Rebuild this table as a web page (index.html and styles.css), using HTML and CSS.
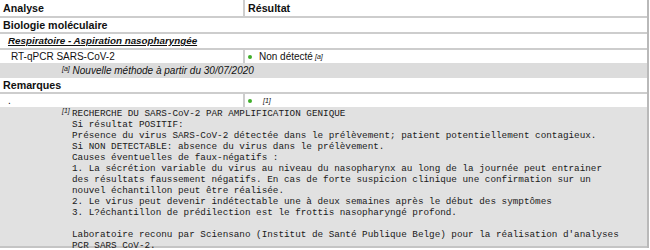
FILE: index.html
```html
<!DOCTYPE html>
<html lang="fr">
<head>
<meta charset="utf-8">
<link rel="stylesheet" href="styles.css">
</head>
<body>
<div class="report">
  <div class="row head">
    <div class="cell">Analyse</div>
    <div class="cell res">Résultat</div>
  </div>
  <div class="row group">
    <div class="cell span">Biologie moléculaire</div>
  </div>
  <div class="row sub">
    <div class="cell span"><span class="subtitle">Respiratoire - Aspiration nasopharyngée</span></div>
  </div>
  <div class="row test">
    <div class="cell name">RT-qPCR SARS-CoV-2</div>
    <div class="cell res"><span class="dot"></span>Non détecté <sup class="ref">[a]</sup></div>
  </div>
  <div class="note"><sup class="ref">[a]</sup> Nouvelle méthode à partir du 30/07/2020</div>
  <div class="row group">
    <div class="cell span">Remarques</div>
  </div>
  <div class="row test dotrow">
    <div class="cell name">.</div>
    <div class="cell res"><span class="dot"></span><sup class="ref">[1]</sup></div>
  </div>
<pre class="comment"><sup class="ref hang">[1]</sup>RECHERCHE DU SARS-CoV-2 PAR AMPLIFICATION GENIQUE
Si résultat POSITIF:
Présence du virus SARS-CoV-2 détectée dans le prélèvement; patient potentiellement contagieux.
Si NON DETECTABLE: absence du virus dans le prélèvement.
Causes éventuelles de faux-négatifs :
1. La sécrétion variable du virus au niveau du nasopharynx au long de la journée peut entrainer
des résultats faussement négatifs. En cas de forte suspicion clinique une confirmation sur un
nouvel échantillon peut être réalisée.
2. Le virus peut devenir indétectable une à deux semaines après le début des symptômes
3. L?échantillon de prédilection est le frottis nasopharyngé profond.

Laboratoire reconu par Sciensano (Institut de Santé Publique Belge) pour la réalisation d'analyses
PCR SARS CoV-2.</pre>
</div>
</body>
</html>
```

FILE: styles.css
```css
html, body {
  margin: 0;
  padding: 0;
  background: #ffffff;
}

body {
  font-family: "Liberation Sans", Arial, sans-serif;
  font-size: 10px;
  color: #111111;
}

.report {
  width: 647px;
  border-right: 2px solid #b9b9b9;
}

.row {
  display: grid;
  grid-template-columns: 243px 1fr;
  border-bottom: 2px solid #cdcdcd;
}

.cell {
  padding-left: 3px;
  white-space: nowrap;
}

.cell.span {
  grid-column: 1 / 3;
}

.cell.res {
  border-left: 2px solid #cdcdcd;
  padding-left: 3px;
  display: flex;
  align-items: center;
}

.head {
  height: 16px;
  line-height: 16px;
  font-weight: bold;
  font-size: 10.7px;
}

.group {
  height: 14px;
  line-height: 14px;
  font-weight: bold;
  font-size: 10.7px;
}

.sub {
  height: 14px;
  line-height: 14px;
}

.subtitle {
  display: inline-block;
  margin-left: 5px;
  font-weight: bold;
  font-style: italic;
  font-size: 9.8px;
  text-decoration: underline;
}

.test {
  height: 13px;
  line-height: 13px;
  border-bottom: none;
}

.name {
  padding-left: 11px;
}

.dotrow .name {
  padding-left: 8px;
}

.dot {
  display: inline-block;
  width: 4px;
  height: 4px;
  border-radius: 50%;
  background: #3fae2a;
  margin-right: 7px;
}

.ref {
  font-size: 7px;
  font-style: italic;
  vertical-align: 3px;
  line-height: 0;
}

.test .res .ref {
  margin-left: 2px;
}

.dotrow .res .ref {
  margin-left: 4px;
}

.note {
  height: 15px;
  line-height: 15px;
  background: #dcdcdc;
  padding-left: 62px;
  font-style: italic;
  white-space: nowrap;
}

.comment {
  margin: 0;
  background: #e1e1e1;
  font-family: "Liberation Mono", "Courier New", monospace;
  font-size: 9.3px;
  line-height: 11px;
  padding: 1px 0 0 72px;
  height: 141px;
  box-sizing: border-box;
  border-bottom: 2px solid #c4c4c4;
  color: #1a1a1a;
}

.hang {
  margin-left: -10px;
  font-family: "Liberation Sans", Arial, sans-serif;
  display: inline-block;
  width: 10px;
}
```
